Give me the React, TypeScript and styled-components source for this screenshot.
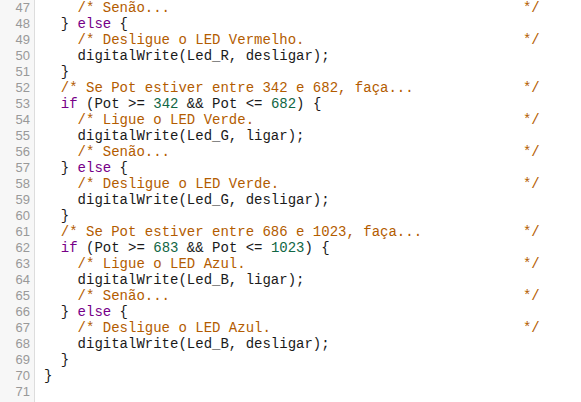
import React from "react";
import styled, { createGlobalStyle } from "styled-components";

const GlobalStyle = createGlobalStyle`
  html, body { margin: 0; padding: 0; background: #ffffff; }
  body { overflow: hidden; }
`;

const COMMENT_COL = 57;
const c = (indent: number, text: string) =>
  (" ".repeat(indent) + "/* " + text).padEnd(COMMENT_COL, " ") + "*/";

const source: string[] = [
  c(4, "Senão..."),
  "  } else {",
  c(4, "Desligue o LED Vermelho."),
  "    digitalWrite(Led_R, desligar);",
  "  }",
  c(2, "Se Pot estiver entre 342 e 682, faça..."),
  "  if (Pot >= 342 && Pot <= 682) {",
  c(4, "Ligue o LED Verde."),
  "    digitalWrite(Led_G, ligar);",
  c(4, "Senão..."),
  "  } else {",
  c(4, "Desligue o LED Verde."),
  "    digitalWrite(Led_G, desligar);",
  "  }",
  c(2, "Se Pot estiver entre 686 e 1023, faça..."),
  "  if (Pot >= 683 && Pot <= 1023) {",
  c(4, "Ligue o LED Azul."),
  "    digitalWrite(Led_B, ligar);",
  c(4, "Senão..."),
  "  } else {",
  c(4, "Desligue o LED Azul."),
  "    digitalWrite(Led_B, desligar);",
  "  }",
  "}",
  "",
];

const FIRST_LINE = 47;

type Kind = "plain" | "comment" | "keyword" | "number";
type Token = { kind: Kind; text: string };

function tokenize(line: string): Token[] {
  const out: Token[] = [];
  const re = /(\/\*.*?\*\/)|\b(if|else)\b|\b(\d+)\b/g;
  let last = 0;
  let m: RegExpExecArray | null;
  while ((m = re.exec(line))) {
    if (m.index > last) out.push({ kind: "plain", text: line.slice(last, m.index) });
    const kind: Kind = m[1] ? "comment" : m[2] ? "keyword" : "number";
    out.push({ kind, text: m[0] });
    last = m.index + m[0].length;
  }
  if (last < line.length) out.push({ kind: "plain", text: line.slice(last) });
  return out;
}

const colors: Record<Kind, string> = {
  plain: "#1a1a1a",
  comment: "#b35c00",
  keyword: "#770088",
  number: "#116644",
};

const Editor = styled.div`
  display: flex;
  width: 100vw;
  height: 100vh;
  overflow: hidden;
  background: #ffffff;
`;

const Gutter = styled.div`
  flex: 0 0 34px;
  background: #f7f7f7;
  border-right: 1px solid #dddddd;
  display: flex;
  flex-direction: column;
  align-items: stretch;
`;

const Scroll = styled.div`
  display: flex;
  flex-direction: column;
  margin-top: 0;
`;

const LineNumber = styled.div`
  height: 16px;
  line-height: 16px;
  padding-right: 4px;
  text-align: right;
  font-family: "Liberation Sans", Arial, sans-serif;
  font-size: 13px;
  color: #999999;
`;

const Code = styled.div`
  flex: 1;
  padding-left: 9px;
`;

const Line = styled.pre`
  margin: 0;
  height: 16px;
  line-height: 16px;
  font-family: "Liberation Mono", "Courier New", monospace;
  font-size: 14px;
  white-space: pre;
  color: #1a1a1a;
`;

const Tok = styled.span<{ $kind: Kind }>`
  color: ${(p) => colors[p.$kind]};
`;

export default function App() {
  return (
    <>
      <GlobalStyle />
      <Editor>
        <Gutter>
          <Scroll>
            {source.map((_, i) => (
              <LineNumber key={i}>{FIRST_LINE + i}</LineNumber>
            ))}
          </Scroll>
        </Gutter>
        <Code>
          <Scroll>
            {source.map((line, i) => (
              <Line key={i}>
                {line === ""
                  ? " "
                  : tokenize(line).map((t, j) => (
                      <Tok key={j} $kind={t.kind}>
                        {t.text}
                      </Tok>
                    ))}
              </Line>
            ))}
          </Scroll>
        </Code>
      </Editor>
    </>
  );
}
